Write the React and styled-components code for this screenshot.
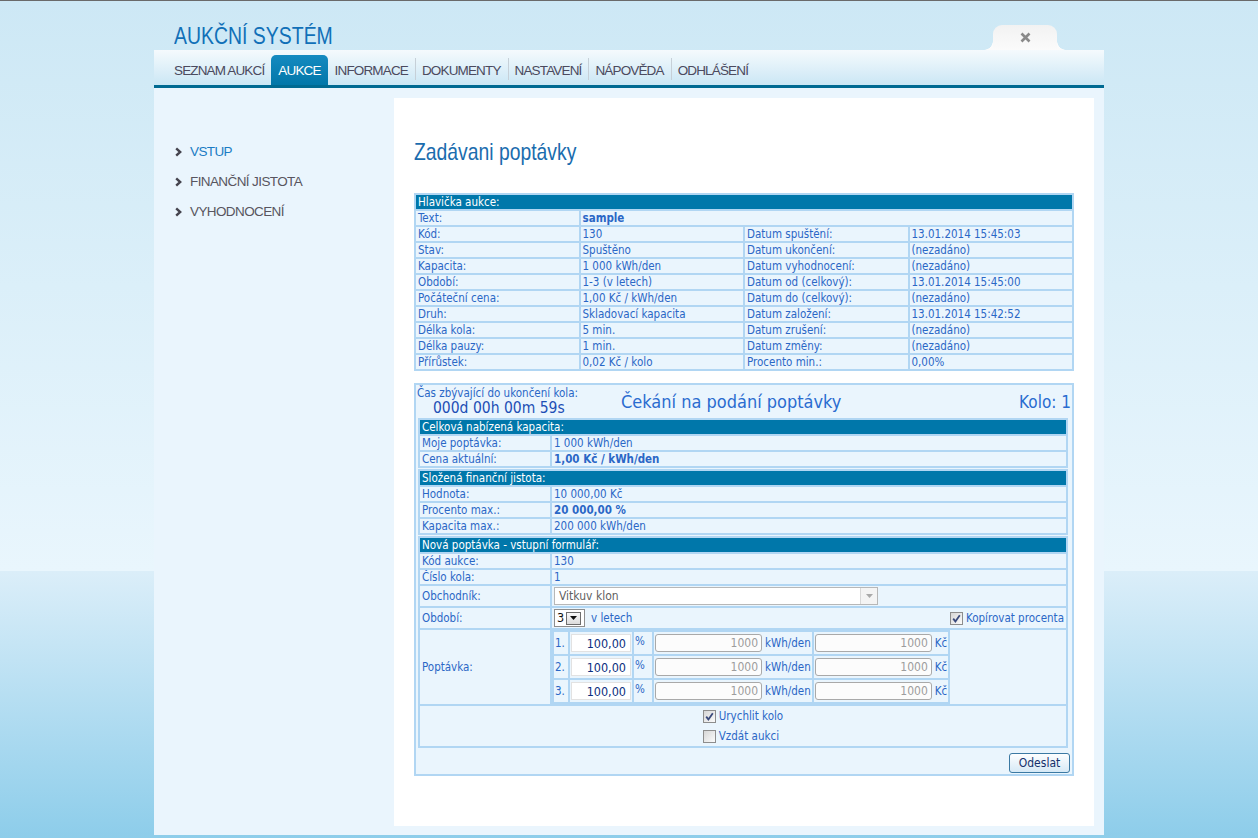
import React from "react";
import styled, { createGlobalStyle, css } from "styled-components";

const SANS = `"Liberation Sans", Arial, sans-serif`;
const TAHOMA = `"DejaVu Sans Condensed", "DejaVu Sans", Tahoma, sans-serif`;

const GlobalStyle = createGlobalStyle`
  html, body {
    margin: 0;
    padding: 0;
  }
  body {
    min-height: 838px;
    background-color: #8dcdea;
    background-image: linear-gradient(
      to bottom,
      #6a6a6a 0,
      #6a6a6a 1px,
      #cde8f5 1px,
      #e9f6fd 571px,
      #dbeef9 571px,
      #8dcdea 838px
    );
    background-repeat: no-repeat;
    background-size: 100% 838px;
  }
`;

const Page = styled.div`
  width: 950px;
  margin: 0 auto;
`;

/* header + close tab */
const Header = styled.header`
  height: 50px;
  display: flex;
  justify-content: space-between;
  padding: 0 47px 0 20px;
`;

// the original face is a narrow grotesque; squeeze Liberation Sans to match
const Logo = styled.h1`
  margin: 0;
  padding-top: 24px;
  font: 400 24px/24px ${SANS};
  color: #1170b8;
  transform: scaleX(0.81);
  transform-origin: left center;
  white-space: nowrap;
`;

const CloseTab = styled.div`
  position: relative;
  align-self: flex-end;
  width: 64px;
  height: 25px;
  background: linear-gradient(#f2f2f2, #fbfbfb);
  border-radius: 9px 9px 0 0;
  display: flex;
  align-items: center;
  justify-content: center;
  &::before,
  &::after {
    content: "";
    position: absolute;
    bottom: 0;
    width: 9px;
    height: 9px;
  }
  &::before {
    left: -9px;
    background: radial-gradient(circle at 0 0, transparent 8.5px, #fbfbfb 9px);
  }
  &::after {
    right: -9px;
    background: radial-gradient(circle at 100% 0, transparent 8.5px, #fbfbfb 9px);
  }
`;

/* main menu */
const Nav = styled.nav`
  height: 35px;
  display: flex;
  align-items: flex-end;
  padding-left: 13px;
  background: linear-gradient(#f5fafd, #cbe7f5);
  border-bottom: 3px solid #006a92;
`;

const NavItem = styled.a`
  position: relative;
  height: 30px;
  padding: 0 7px;
  font: 13.5px/31px ${SANS};
  letter-spacing: -0.85px;
  color: #4b4a5e;
  border-radius: 5px 5px 0 0;
  cursor: pointer;
  ${(p) =>
    p.$active &&
    css`
      color: #fff;
      background: linear-gradient(#158ac0, #0277a9);
    `}
  ${(p) =>
    p.$sep &&
    css`
      &::before {
        content: "";
        position: absolute;
        left: 0;
        top: 3px;
        width: 1px;
        height: 22px;
        background: #c6d0d8;
      }
    `}
`;

/* body */
const Body = styled.div`
  display: flex;
  background: #eaf5fd;
  padding: 10px 10px 9px 0;
`;

const Sidebar = styled.ul`
  width: 240px;
  box-sizing: border-box;
  list-style: none;
  margin: 0;
  padding: 39px 0 0 21px;
`;

const SideItem = styled.li`
  display: flex;
  align-items: center;
  gap: 8px;
  height: 30px;
  font: 13.5px/30px ${SANS};
  letter-spacing: -0.6px;
  color: ${(p) => (p.$active ? "#1b7cc4" : "#58555f")};
`;

const Content = styled.main`
  width: 700px;
  height: 728px;
  box-sizing: border-box;
  background: #fff;
  padding: 42px 20px 0;
`;

const Title = styled.h2`
  margin: 0 0 29px;
  font: 400 24px/24px ${SANS};
  color: #1a6cae;
  transform: scaleX(0.806);
  transform-origin: left center;
  white-space: nowrap;
`;

/* tables */
const Grid = styled.table`
  width: ${(p) => p.$w || "660px"};
  border-spacing: 2px;
  background: #b1d6f3;
  table-layout: fixed;
  font: 11.5px/14px ${TAHOMA};
  color: #2a67c6;
`;

const Cell = styled.td`
  height: ${(p) => p.$h || 14}px;
  padding: 0 2px;
  background: #eaf5fd;
  white-space: nowrap;
  overflow: hidden;
  font-weight: ${(p) => (p.$bold ? 700 : 400)};
`;

const HeadCell = styled.td`
  height: 14px;
  padding: 0 2px;
  background: #0077aa;
  color: #fff;
  white-space: nowrap;
`;

const LabelCol = styled.col`
  width: 130px;
`;

const BidPanel = styled.div`
  margin-top: 12px;
  width: 660px;
  box-sizing: border-box;
  border: 2px solid #b1d6f3;
  background: #eaf5fd;
  padding: 0 4px 1px 2px;
`;

const TopBar = styled.div`
  height: 33px;
  display: grid;
  grid-template-columns: 204px 1fr auto;
  align-items: center;
  margin: 0 -3px 0 -1px;
  color: #2a67c6;
`;

const Countdown = styled.div`
  font: 11.5px/13px ${TAHOMA};
  strong {
    display: block;
    padding-left: 16px;
    font: 400 15.5px/17px ${TAHOMA};
    color: #1d4fb5;
  }
`;

const State = styled.div`
  font: ${(p) => p.$size || 17}px/18px ${TAHOMA};
  color: #2a6cd0;
  padding-top: 1px;
`;

const Sections = styled.div`
  display: flex;
  flex-direction: column;
  gap: 1px;
`;

/* form controls */
const Select = styled.div`
  display: flex;
  width: 324px;
  height: 18px;
  box-sizing: border-box;
  border: 1px solid #b7b7b7;
  background: #fff;
  font: 12px/16px ${TAHOMA};
  color: #5f5f5f;
`;

const SelectText = styled.span`
  flex: 1;
  padding-left: 4px;
`;

const SelectArrow = styled.span`
  width: 16px;
  border-left: 1px solid #d8d8d8;
  background: #f4f4f4;
  display: flex;
  align-items: center;
  justify-content: center;
`;

const PeriodRow = styled.div`
  display: flex;
  align-items: center;
  gap: 6px;
`;

const SmallSelect = styled.div`
  display: flex;
  align-items: center;
  width: 31px;
  height: 18px;
  box-sizing: border-box;
  border: 1px solid #8e8e8e;
  background: #fff;
  font: 12.5px/16px ${TAHOMA};
  color: #111;
  padding-left: 2px;
  gap: 2px;
`;

const SmallArrow = styled.span`
  width: 15px;
  height: 13px;
  box-sizing: border-box;
  border: 1px solid #6e6e6e;
  background: linear-gradient(#fafafa, #dcdcdc);
  display: flex;
  align-items: center;
  justify-content: center;
`;

const Spacer = styled.span`
  flex: 1;
`;

const CheckLine = styled.label`
  display: flex;
  align-items: center;
  gap: 3px;
  height: 20px;
`;

const Box = styled.span`
  display: inline-flex;
  align-items: center;
  justify-content: center;
  width: 13px;
  height: 13px;
  box-sizing: border-box;
  border: 1px solid #8d8d8d;
  background: linear-gradient(135deg, #d6d6d6, #fbfbfb);
`;

const CheckGroup = styled.div`
  display: flex;
  justify-content: center;
`;

const CheckStack = styled.div`
  display: flex;
  flex-direction: column;
`;

const DemandTable = styled.table`
  border-spacing: 2px;
  background: #b1d6f3;
  font: 11.5px/14px ${TAHOMA};
  color: #2a67c6;
`;

const DemandRow = styled.tr`
  height: 22px;
`;

const DemandCell = styled.td`
  padding: 0 1px;
  background: #eaf5fd;
  white-space: nowrap;
  vertical-align: ${(p) => (p.$top ? "top" : "middle")};
  padding-top: ${(p) => (p.$top ? 2 : 0)}px;
  width: ${(p) => (p.$w ? `${p.$w}px` : "auto")};
`;

const PctInput = styled.input`
  width: 60px;
  height: 18px;
  box-sizing: border-box;
  margin: 0;
  border: 1px solid #e2e2e2;
  background: #fff;
  padding: 0 4px;
  text-align: right;
  font: 12.5px ${TAHOMA};
  color: #0d2f80;
  vertical-align: top;
`;

const AmountInput = styled.input`
  width: ${(p) => p.$w}px;
  height: 18px;
  box-sizing: border-box;
  margin: 0 3px 0 0;
  border: 1px solid #a9a9a9;
  border-radius: 3px;
  background: #fcfcfc;
  padding: 0 3px;
  text-align: right;
  font: 12px ${TAHOMA};
  color: #9d9d9d;
  vertical-align: top;
`;

const Unit = styled.span`
  display: inline-block;
  line-height: 18px;
  vertical-align: top;
`;

const Actions = styled.div`
  display: flex;
  justify-content: flex-end;
  padding-top: 5px;
  margin-right: -2px;
`;

const SubmitButton = styled.button`
  width: 61px;
  height: 20px;
  padding: 0;
  border: 1px solid #3b79a3;
  border-radius: 3px;
  background: linear-gradient(#fdfeff, #d6e9f6);
  font: 12px ${TAHOMA};
  color: #14306a;
  cursor: pointer;
`;

/* small drawings */
const Chevron = () => (
  <svg width="7" height="10" viewBox="0 0 7 10">
    <path d="M1.2 1.3 L5.2 5 L1.2 8.7" fill="none" stroke="#45444e" strokeWidth="2.4" />
  </svg>
);

const CloseIcon = () => (
  <svg width="11" height="11" viewBox="0 0 11 11">
    <path d="M1.5 1.5 L9.5 9.5 M9.5 1.5 L1.5 9.5" stroke="#8a8a8a" strokeWidth="2.6" />
  </svg>
);

const Tick = () => (
  <svg width="9" height="9" viewBox="0 0 9 9">
    <path d="M1.2 4.6 L3.4 7.4 L7.8 1.2" fill="none" stroke="#3a4a7c" strokeWidth="1.8" />
  </svg>
);

const Checkbox = ({ checked, children }) => (
  <CheckLine>
    <Box>{checked && <Tick />}</Box>
    {children}
  </CheckLine>
);

const auctionRows = [
  ["Kód:", "130", "Datum spuštění:", "13.01.2014 15:45:03"],
  ["Stav:", "Spuštěno", "Datum ukončení:", "(nezadáno)"],
  ["Kapacita:", "1 000 kWh/den", "Datum vyhodnocení:", "(nezadáno)"],
  ["Období:", "1-3 (v letech)", "Datum od (celkový):", "13.01.2014 15:45:00"],
  ["Počáteční cena:", "1,00 Kč / kWh/den", "Datum do (celkový):", "(nezadáno)"],
  ["Druh:", "Skladovací kapacita", "Datum založení:", "13.01.2014 15:42:52"],
  ["Délka kola:", "5 min.", "Datum zrušení:", "(nezadáno)"],
  ["Délka pauzy:", "1 min.", "Datum změny:", "(nezadáno)"],
  ["Přírůstek:", "0,02 Kč / kolo", "Procento min.:", "0,00%"],
];

const menu = [
  { label: "SEZNAM AUKCÍ" },
  { label: "AUKCE", active: true },
  { label: "INFORMACE" },
  { label: "DOKUMENTY", sep: true },
  { label: "NASTAVENÍ", sep: true },
  { label: "NÁPOVĚDA", sep: true },
  { label: "ODHLÁŠENÍ", sep: true },
];

const Section = ({ title, children }) => (
  <Grid $w="650px">
    <colgroup>
      <LabelCol />
      <col />
    </colgroup>
    <tbody>
      <tr>
        <HeadCell colSpan={2}>{title}</HeadCell>
      </tr>
      {children}
    </tbody>
  </Grid>
);

export default function App() {
  return (
    <>
      <GlobalStyle />
      <Page>
        <Header>
          <Logo>AUKČNÍ SYSTÉM</Logo>
          <CloseTab>
            <CloseIcon />
          </CloseTab>
        </Header>
        <Nav>
          {menu.map((m) => (
            <NavItem key={m.label} $active={m.active} $sep={m.sep}>
              {m.label}
            </NavItem>
          ))}
        </Nav>
        <Body>
          <Sidebar>
            <SideItem $active>
              <Chevron />
              VSTUP
            </SideItem>
            <SideItem>
              <Chevron />
              FINANČNÍ JISTOTA
            </SideItem>
            <SideItem>
              <Chevron />
              VYHODNOCENÍ
            </SideItem>
          </Sidebar>
          <Content>
            <Title>Zadávani poptávky</Title>

            <Grid>
              <tbody>
                <tr>
                  <HeadCell colSpan={4}>Hlavička aukce:</HeadCell>
                </tr>
                <tr>
                  <Cell>Text:</Cell>
                  <Cell colSpan={3} $bold>
                    sample
                  </Cell>
                </tr>
                {auctionRows.map((r) => (
                  <tr key={r[0]}>
                    {r.map((v, i) => (
                      <Cell key={i}>{v}</Cell>
                    ))}
                  </tr>
                ))}
              </tbody>
            </Grid>

            <BidPanel>
              <TopBar>
                <Countdown>
                  Čas zbývající do ukončení kola:
                  <strong>000d 00h 00m 59s</strong>
                </Countdown>
                <State $size={18}>Čekání na podání poptávky</State>
                <State>Kolo: 1</State>
              </TopBar>

              <Sections>
                <Section title="Celková nabízená kapacita:">
                  <tr>
                    <Cell>Moje poptávka:</Cell>
                    <Cell>1 000 kWh/den</Cell>
                  </tr>
                  <tr>
                    <Cell>Cena aktuální:</Cell>
                    <Cell $bold>1,00 Kč / kWh/den</Cell>
                  </tr>
                </Section>

                <Section title="Složená finanční jistota:">
                  <tr>
                    <Cell>Hodnota:</Cell>
                    <Cell>10 000,00 Kč</Cell>
                  </tr>
                  <tr>
                    <Cell>Procento max.:</Cell>
                    <Cell $bold>20 000,00 %</Cell>
                  </tr>
                  <tr>
                    <Cell>Kapacita max.:</Cell>
                    <Cell>200 000 kWh/den</Cell>
                  </tr>
                </Section>

                <Section title="Nová poptávka - vstupní formulář:">
                  <tr>
                    <Cell>Kód aukce:</Cell>
                    <Cell>130</Cell>
                  </tr>
                  <tr>
                    <Cell>Číslo kola:</Cell>
                    <Cell>1</Cell>
                  </tr>
                  <tr>
                    <Cell $h={20}>Obchodník:</Cell>
                    <Cell $h={20}>
                      <Select>
                        <SelectText>Vitkuv klon</SelectText>
                        <SelectArrow>
                          <svg width="7" height="4" viewBox="0 0 7 4">
                            <path d="M0 0 H7 L3.5 4 Z" fill="#a9a9a9" />
                          </svg>
                        </SelectArrow>
                      </Select>
                    </Cell>
                  </tr>
                  <tr>
                    <Cell $h={20}>Období:</Cell>
                    <Cell $h={20}>
                      <PeriodRow>
                        <SmallSelect>
                          3
                          <SmallArrow>
                            <svg width="7" height="4" viewBox="0 0 7 4">
                              <path d="M0 0 H7 L3.5 4 Z" fill="#111" />
                            </svg>
                          </SmallArrow>
                        </SmallSelect>
                        v letech
                        <Spacer />
                        <Checkbox checked>Kopírovat procenta</Checkbox>
                      </PeriodRow>
                    </Cell>
                  </tr>
                  <tr>
                    <Cell $h={74}>Poptávka:</Cell>
                    <Cell $h={74} style={{ padding: 0 }}>
                      <DemandTable>
                        <tbody>
                          {[1, 2, 3].map((n) => (
                            <DemandRow key={n}>
                              <DemandCell $w={12}>{n}.</DemandCell>
                              <DemandCell>
                                <PctInput readOnly value="100,00" />
                              </DemandCell>
                              <DemandCell $top $w={16}>
                                %
                              </DemandCell>
                              <DemandCell>
                                <AmountInput readOnly $w={107} value="1000" />
                                <Unit>kWh/den</Unit>
                              </DemandCell>
                              <DemandCell>
                                <AmountInput readOnly $w={117} value="1000" />
                                <Unit>Kč</Unit>
                              </DemandCell>
                            </DemandRow>
                          ))}
                        </tbody>
                      </DemandTable>
                    </Cell>
                  </tr>
                  <tr>
                    <Cell colSpan={2} $h={40}>
                      <CheckGroup>
                        <CheckStack>
                          <Checkbox checked>Urychlit kolo</Checkbox>
                          <Checkbox>Vzdát aukci</Checkbox>
                        </CheckStack>
                      </CheckGroup>
                    </Cell>
                  </tr>
                </Section>
              </Sections>

              <Actions>
                <SubmitButton>Odeslat</SubmitButton>
              </Actions>
            </BidPanel>
          </Content>
        </Body>
      </Page>
    </>
  );
}
